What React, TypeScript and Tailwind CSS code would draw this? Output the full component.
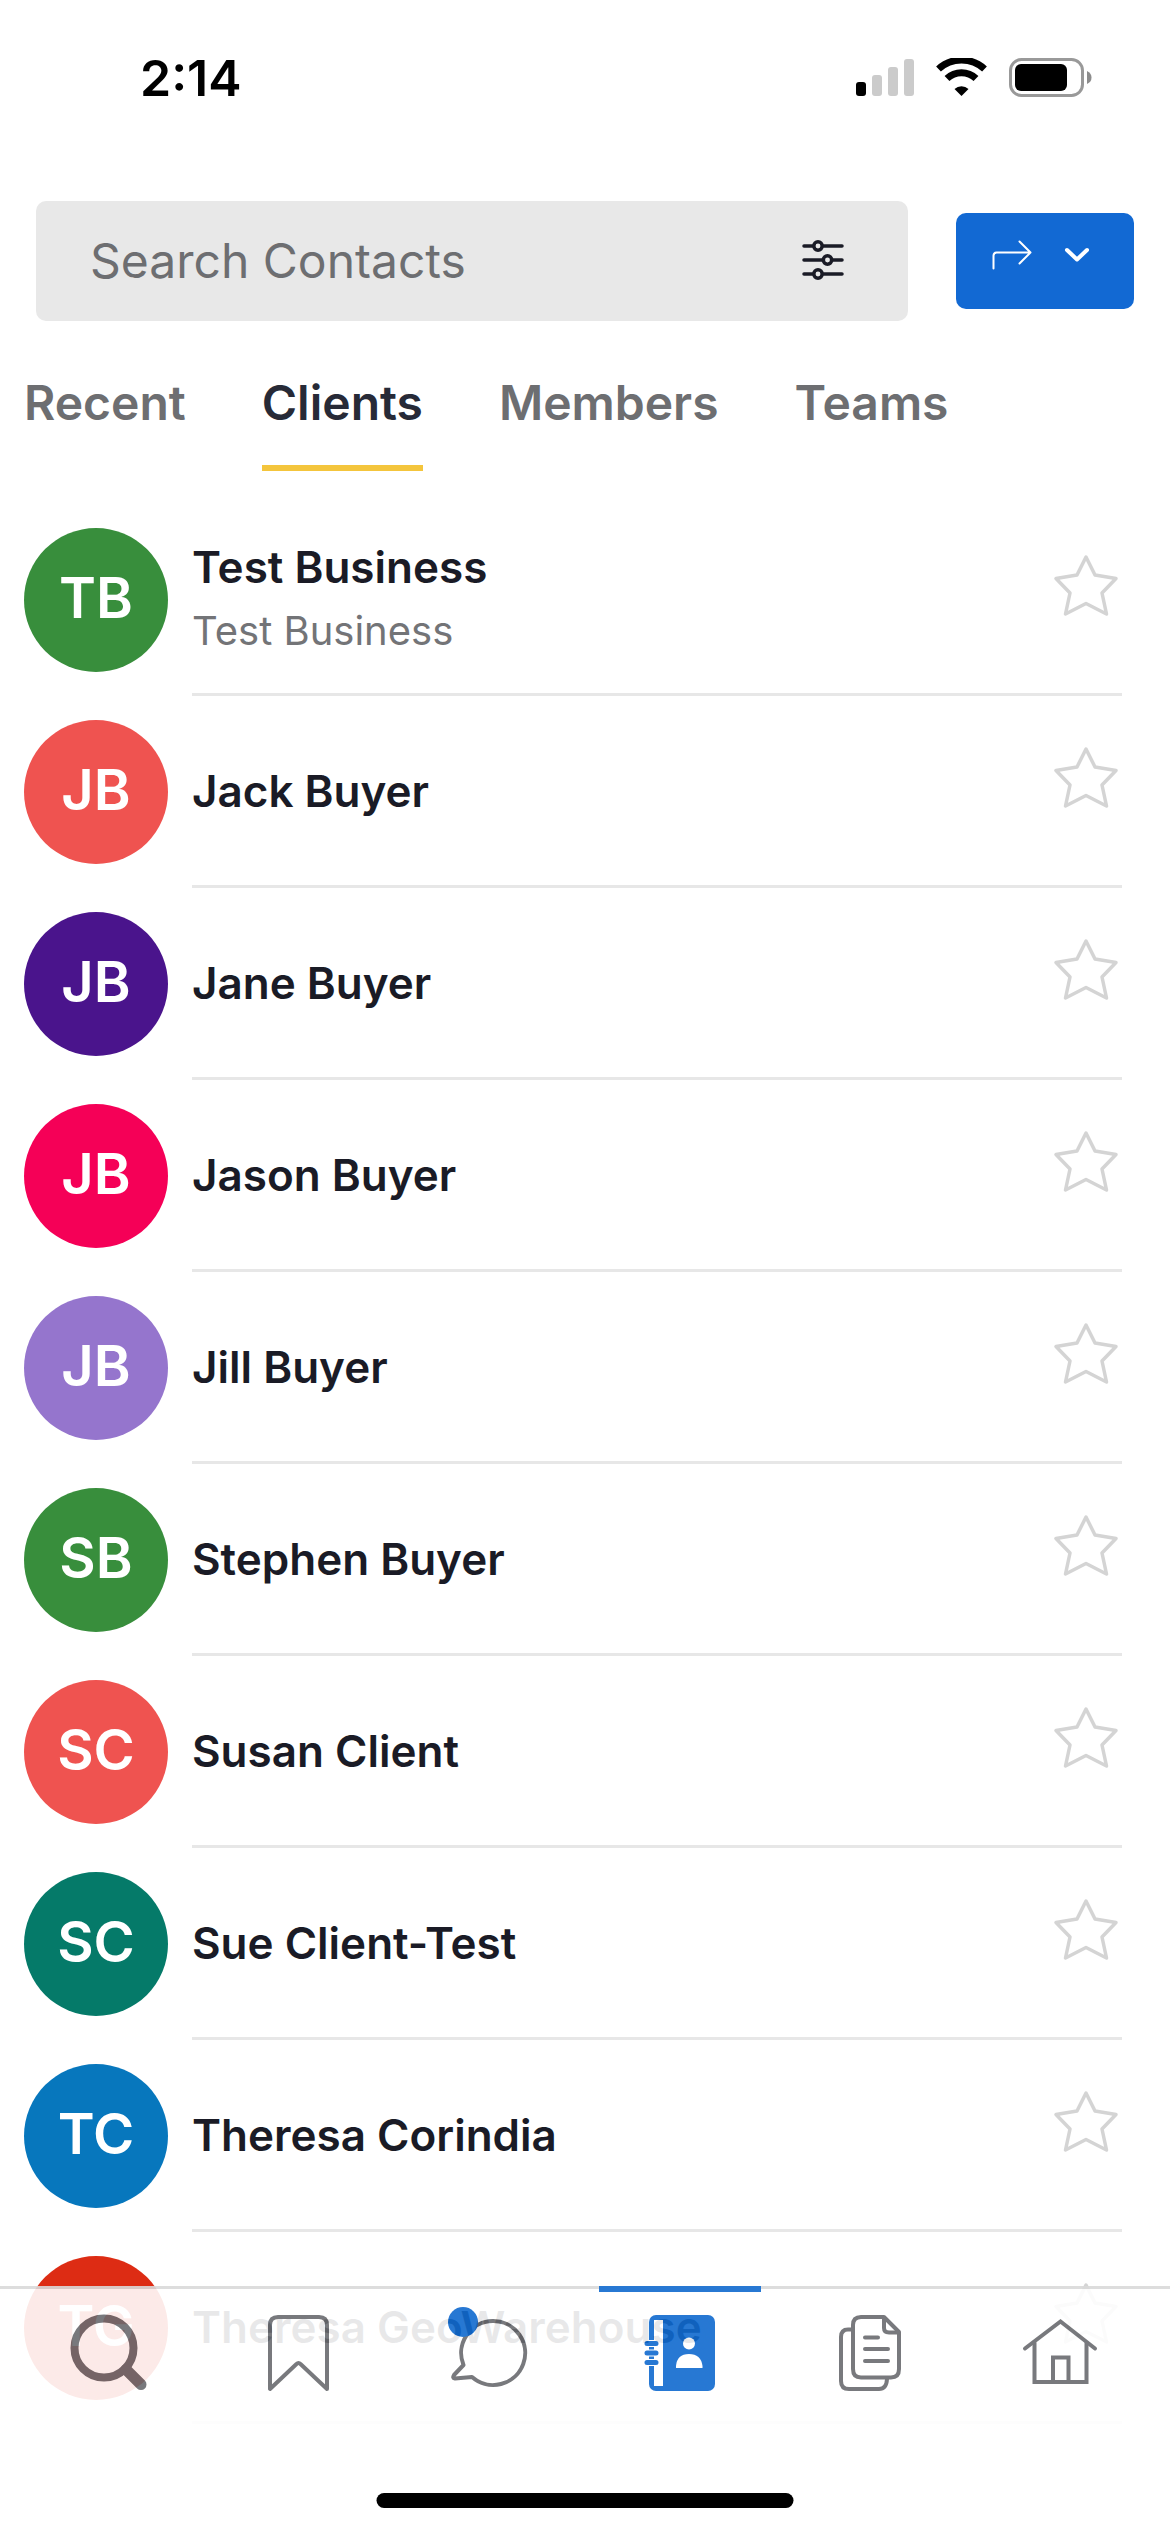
import React, { useState } from 'react';

interface Contact {
  name: string;
  company?: string;
  initials: string;
  color: string;
}

const CONTACTS: Contact[] = [
  { name: 'Test Business', company: 'Test Business', initials: 'TB', color: 'bg-[#388e3c]' },
  { name: 'Jack Buyer', initials: 'JB', color: 'bg-[#ef5350]' },
  { name: 'Jane Buyer', initials: 'JB', color: 'bg-[#4a148c]' },
  { name: 'Jason Buyer', initials: 'JB', color: 'bg-[#f50057]' },
  { name: 'Jill Buyer', initials: 'JB', color: 'bg-[#9575cd]' },
  { name: 'Stephen Buyer', initials: 'SB', color: 'bg-[#388e3c]' },
  { name: 'Susan Client', initials: 'SC', color: 'bg-[#ef5350]' },
  { name: 'Sue Client-Test', initials: 'SC', color: 'bg-[#057a69]' },
  { name: 'Theresa Corindia', initials: 'TC', color: 'bg-[#0777bd]' },
  { name: 'Theresa GeoWarehouse', initials: 'TG', color: 'bg-[#dd2c14]' },
];

const TABS = ['Recent', 'Clients', 'Members', 'Teams'];

const StatusBar = () => (
  <div className="flex h-[153px] items-start justify-between pt-12 pr-[78px] pl-[140px]">
    <span className="text-[50px] leading-[60px] font-semibold text-black">2:14</span>
    <svg width="236" height="40" viewBox="0 0 236 40" className="mt-2.5" aria-hidden="true">
      <rect x="0" y="24" width="10" height="14" rx="3" />
      <g fill="#cbcbcb">
        <rect x="16" y="17" width="10" height="21" rx="3" />
        <rect x="32" y="9" width="10" height="29" rx="3" />
        <rect x="48" y="1" width="10" height="37" rx="3" />
      </g>
      <g fill="none" stroke="#000" strokeWidth="7">
        <path d="M82.5 11 A34 34 0 0 1 128.500 11" />
        <path d="M91 20.500 A21 21 0 0 1 120 20.500" />
      </g>
      <path d="M98.500 31 A10.500 10.500 0 0 1 112.500 31 L105.500 38 Z" />
      <rect x="154.500" y="1.500" width="72" height="36" rx="11" fill="none" stroke="#999" strokeWidth="3" />
      <rect x="159" y="6" width="52" height="27" rx="6" />
      <path d="M231 13 Q235.500 15 235.500 19.500 Q235.500 24 231 26 Z" fill="#8c8c8c" />
    </svg>
  </div>
);

const FilterIcon = () => (
  <svg width="42" height="42" viewBox="0 0 42 42" fill="none" stroke="#1a1b26" strokeWidth="3.500" strokeLinecap="round" aria-hidden="true">
    <path d="M2 6H10.500M21.500 6H40M2 20H20M31 20H40M2 34H10.500M21.500 34H40" />
    <circle cx="16" cy="6" r="4.200" />
    <circle cx="25.500" cy="20" r="4.200" />
    <circle cx="16" cy="34" r="4.200" />
  </svg>
);

const StarIcon = () => (
  <svg width="68" height="68" viewBox="0 0 68 68" fill="none" stroke="#d4d4d4" strokeWidth="3.500" strokeLinejoin="round" aria-hidden="true">
    <path d="M34 5L43 23L64 26.500L50 41L54.500 62L34 51.500L13.500 62L18 41L4 26.500L25 23Z" />
  </svg>
);

const ContactRow: React.FC<{ contact: Contact }> = ({ contact }) => (
  <li className="flex h-48 gap-6">
    <div className={`${contact.color} mt-6 flex size-36 shrink-0 items-center justify-center rounded-full pb-1 text-[56px] font-semibold text-white`}>
      {contact.initials}
    </div>
    <div className="flex flex-1 border-b-3 border-[#e7e7e7]">
      <div className="flex flex-1 flex-col justify-center gap-1">
        <div className="text-[44px] leading-[60px] font-semibold text-[#1a1b26]">{contact.name}</div>
        {contact.company && <div className="text-[40px] leading-[60px] text-[#737477]">{contact.company}</div>}
      </div>
      <button type="button" aria-label={`Favorite ${contact.name}`} className="mt-12 mr-0.5 self-start">
        <StarIcon />
      </button>
    </div>
  </li>
);

const NavSearch = () => (
  <svg width="84" height="84" viewBox="0 0 84 84" fill="none" stroke="#6a6b6f" aria-hidden="true">
    <circle cx="37" cy="37" r="29.500" strokeWidth="8" />
    <path d="M59 58.500L74 73.500" strokeWidth="11" strokeLinecap="round" />
  </svg>
);

const NavBookmark = () => (
  <svg width="84" height="84" viewBox="0 0 84 84" fill="none" stroke="#6a6b6f" strokeWidth="4" strokeLinejoin="round" aria-hidden="true">
    <path d="M13 78V14Q13 6 21 6H62Q70 6 70 14V78L43.500 53Q41.500 51 39.500 53L13 78Z" />
  </svg>
);

const NavChat = () => (
  <svg width="84" height="92" viewBox="0 0 84 92" fill="none" aria-hidden="true">
    <path
      d="M15.500 58A32 32 0 1 1 24 70L7 71.500Q4 71 6 68Z"
      stroke="#6a6b6f"
      strokeWidth="4"
      strokeLinejoin="round"
    />
    <circle cx="15" cy="15" r="15" fill="#106acf" />
  </svg>
);

const NavContacts = () => (
  <svg width="84" height="84" viewBox="0 0 84 84" aria-hidden="true">
    <rect x="11" y="4" width="66" height="76" rx="7" fill="#106acf" />
    <rect x="16" y="9" width="9" height="66" fill="#fff" />
    <g stroke="#fff" strokeWidth="7" strokeLinecap="round">
      <path d="M9 32.500H18M9 42H18M9 51.500H18" />
    </g>
    <g stroke="#106acf" strokeWidth="5" strokeLinecap="round">
      <path d="M9 32.500H18M9 42H18M9 51.500H18" />
    </g>
    <circle cx="51" cy="32.500" r="6" fill="#fff" />
    <path d="M38 57V55Q39 43 51 43Q63 43 64.500 55V57Z" fill="#fff" />
  </svg>
);

const NavDocs = () => (
  <svg width="84" height="84" viewBox="0 0 84 84" fill="none" stroke="#6a6b6f" strokeWidth="4" strokeLinecap="round" strokeLinejoin="round" aria-hidden="true">
    <path d="M23 18.500H20Q13 18.500 13 26V70Q13 78 21 78H51Q58.500 78 59 68" />
    <path d="M33 6H56L71 21V58Q71 66.500 63 66.500H33Q25 66.500 25 58V14Q25 6 33 6Z" />
    <path d="M56 7V17Q56 21.500 61 21.500H70" />
    <path d="M37 26.500H50M37 38H60M37 50H60" />
  </svg>
);

const NavHome = () => (
  <svg width="84" height="84" viewBox="0 0 84 84" fill="none" stroke="#6a6b6f" strokeWidth="4" strokeLinecap="round" aria-hidden="true">
    <path d="M6 37.500L41.500 10.500L76 37.500" />
    <path d="M15.500 32V71H67.500V32M34 70V46.500H49.500V70" />
  </svg>
);

const NAV_ITEMS = [
  { label: 'Search', icon: <NavSearch /> },
  { label: 'Saved', icon: <NavBookmark /> },
  { label: 'Messages', icon: <NavChat /> },
  { label: 'Contacts', icon: <NavContacts /> },
  { label: 'Documents', icon: <NavDocs /> },
  { label: 'Home', icon: <NavHome /> },
];

export default function App() {
  const [tab, setTab] = useState('Clients');
  const [query, setQuery] = useState('');

  return (
    <div className="h-screen overflow-hidden bg-white font-['Inter',sans-serif]">
      <StatusBar />

      <header>
        <div className="flex items-center gap-12 px-9 pt-12">
          <div className="flex h-[120px] min-w-0 flex-1 items-center rounded-[10px] bg-[#e8e8e8] pr-16 pl-[54px]">
            <input
              type="text"
              aria-label="Search Contacts"
              placeholder="Search Contacts"
              value={query}
              onChange={e => setQuery(e.target.value)}
              className="min-w-0 flex-1 bg-transparent text-[48px] leading-[60px] text-[#1a1b26] outline-none placeholder:text-[#6d6e71]"
            />
            <button type="button" aria-label="Filter">
              <FilterIcon />
            </button>
          </div>
          <button type="button" aria-label="Share" className="flex h-24 w-[178px] shrink-0 items-center gap-8 rounded-[10px] bg-[#1269d3] pb-3 pl-9">
            <svg width="40" height="30" viewBox="0 0 40 30" fill="none" stroke="#fff" strokeWidth="2" strokeLinecap="round" strokeLinejoin="round" aria-hidden="true">
              <path d="M1.500 28.500V16Q1.500 12.500 4.500 12.500H38.500M27.500 1.500L38.500 12.500L27.500 23.500" />
            </svg>
            <svg width="26" height="16" viewBox="0 0 26 16" fill="none" stroke="#fff" strokeWidth="4" strokeLinecap="round" strokeLinejoin="round" aria-hidden="true">
              <path d="M3 3L13 12.500L23 3" />
            </svg>
          </button>
        </div>

        <nav className="flex h-[183px] items-start gap-[76px] px-6 pt-[52px]">
          {TABS.map(t => (
            <button
              key={t}
              type="button"
              onClick={() => setTab(t)}
              className={`h-[98px] border-b-6 pb-8 text-[48px] leading-[60px] font-semibold ${
                t === tab ? 'border-[#f4c53c] text-[#272a37]' : 'border-transparent text-[#6d6e71]'
              }`}
            >
              {t}
            </button>
          ))}
        </nav>
      </header>

      <ul className="pr-12 pl-6">
        {CONTACTS.map(contact => (
          <ContactRow key={contact.name} contact={contact} />
        ))}
      </ul>

      {/* Translucent tab bar over the list */}
      <nav className="fixed inset-x-0 bottom-0 h-[246px] border-t-3 border-[#dadada] bg-white px-3.5 opacity-90">
        <div className="grid grid-cols-6">
          {NAV_ITEMS.map(item => (
            <button key={item.label} type="button" aria-label={item.label} className="relative flex h-32 items-center justify-center">
              {item.label === 'Contacts' && <span className="absolute inset-x-3.5 -top-[3px] h-1.5 bg-[#106acf]" />}
              {item.icon}
            </button>
          ))}
        </div>
      </nav>
      <div className="fixed bottom-6 left-1/2 h-[15px] w-[417px] -translate-x-1/2 rounded-full bg-black" />
    </div>
  );
}
